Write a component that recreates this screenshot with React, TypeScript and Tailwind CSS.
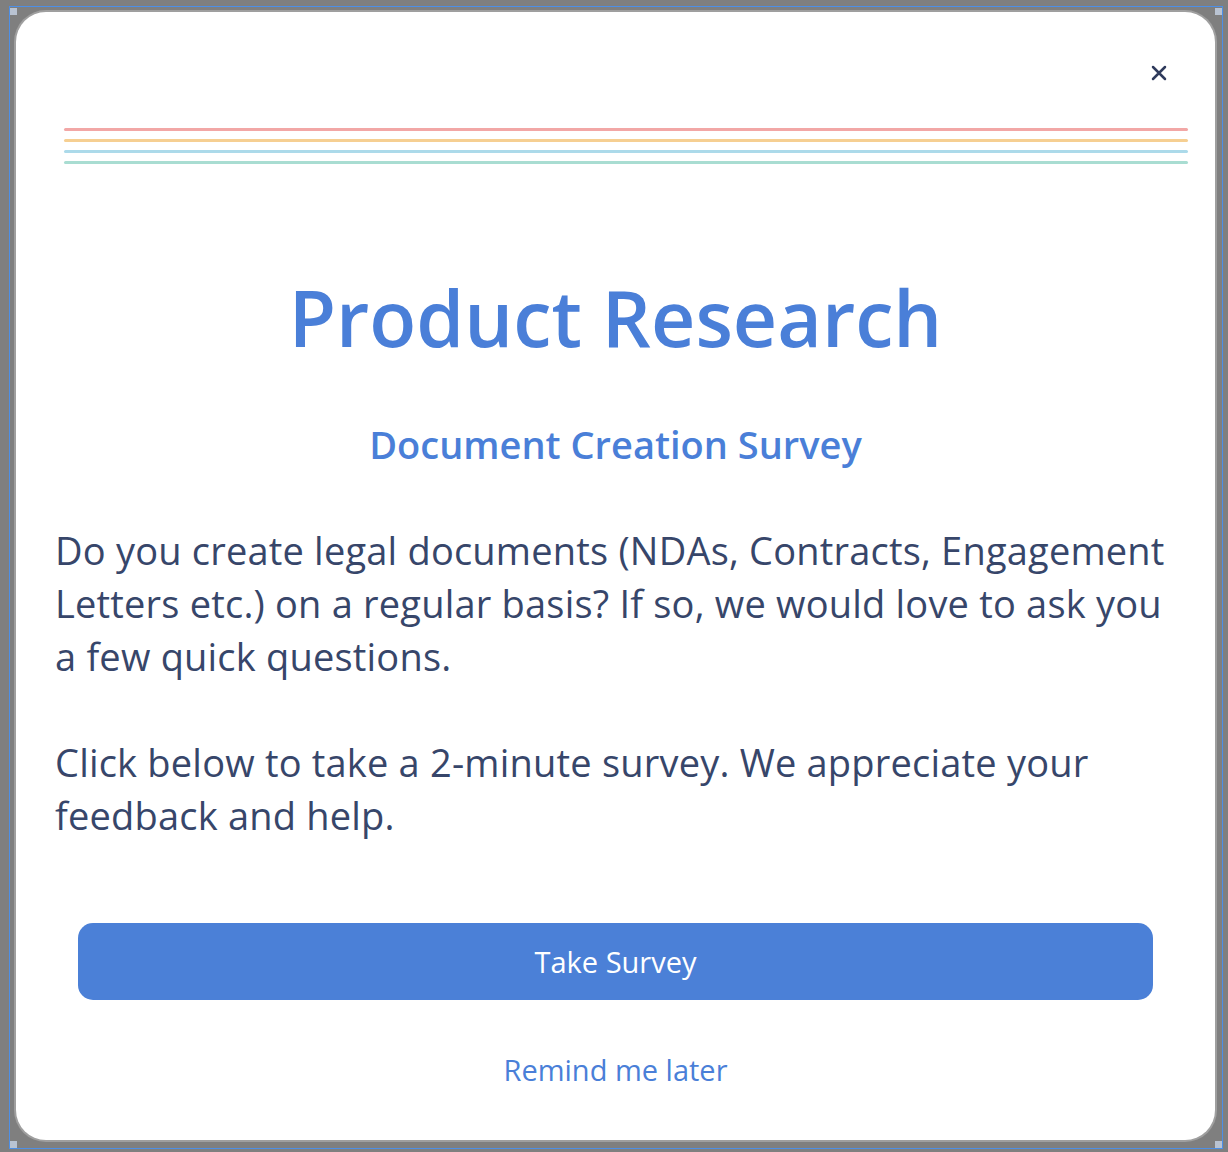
const font = { fontFamily: '"Open Sans", "Noto Sans", sans-serif' };

const stripes = ['bg-[#f2a7a6]', 'bg-[#f6cf92]', 'bg-[#acdaea]', 'bg-[#a9ddd2]'];

function Handle({ className }: { className: string }) {
  return <div className={`absolute h-[7px] w-[7px] bg-[#b9c3d2] ${className}`} />;
}

export default function App() {
  return (
    <div className="h-[1152px] w-[1228px] bg-[#7f7f7f] pl-[9px] pt-[6px]" style={font}>
      <div className="relative h-[1143px] w-[1214px] border border-[#4d8fe6] pl-[6px] pt-[5px]">
        <Handle className="left-0 top-[1px]" />
        <Handle className="right-0 top-[1px]" />
        <Handle className="bottom-0 left-0" />
        <Handle className="bottom-0 right-0" />

        {/* Card */}
        <div className="flex h-[1128px] w-[1199px] flex-col rounded-[30px] bg-white px-[39px] pt-[53px] shadow-[0_0_0_2px_rgba(255,255,255,0.25)]">
          <div className="flex justify-end pr-[9px]">
            <button className="flex h-[16px] w-[16px] items-center justify-center text-[#2f3b5c]" aria-label="Close">
              <svg width="16" height="16" viewBox="0 0 16 16" fill="none">
                <path d="M2 2 L14 14 M14 2 L2 14" stroke="currentColor" strokeWidth="2.5" strokeLinecap="round" />
              </svg>
            </button>
          </div>

          {/* Rainbow stripes */}
          <div className="ml-[9px] mr-[-12px] mt-[47px] flex flex-col gap-[8px]">
            {stripes.map((c) => (
              <div key={c} className={`h-[3px] w-full rounded-full ${c}`} />
            ))}
          </div>

          <h1 className="mt-[115px] text-center text-[77px] font-semibold leading-none text-[#4a7fd8]">
            Product Research
          </h1>

          <h2 className="mt-[69px] text-center text-[38px] font-semibold leading-none text-[#4a7fd8]">
            Document Creation Survey
          </h2>

          <div className="mt-[61px] text-[38px] leading-[53px] tracking-[0.2px] text-[#37466a]">
            <p>
              Do you create legal documents (NDAs, Contracts, Engagement Letters etc.) on a regular basis? If so, we
              would love to ask you a few quick questions.
            </p>
            <p className="mt-[53px]">
              Click below to take a 2-minute survey. We appreciate your feedback and help.
            </p>
          </div>

          <button className="mx-[23px] mt-[81px] h-[77px] shrink-0 rounded-[15px] bg-[#4b80d7] text-[29px] text-white">
            Take Survey
          </button>

          <button className="mt-[55px] self-center text-[29px] leading-none text-[#4a7fd8]">Remind me later</button>
        </div>
      </div>
    </div>
  );
}
